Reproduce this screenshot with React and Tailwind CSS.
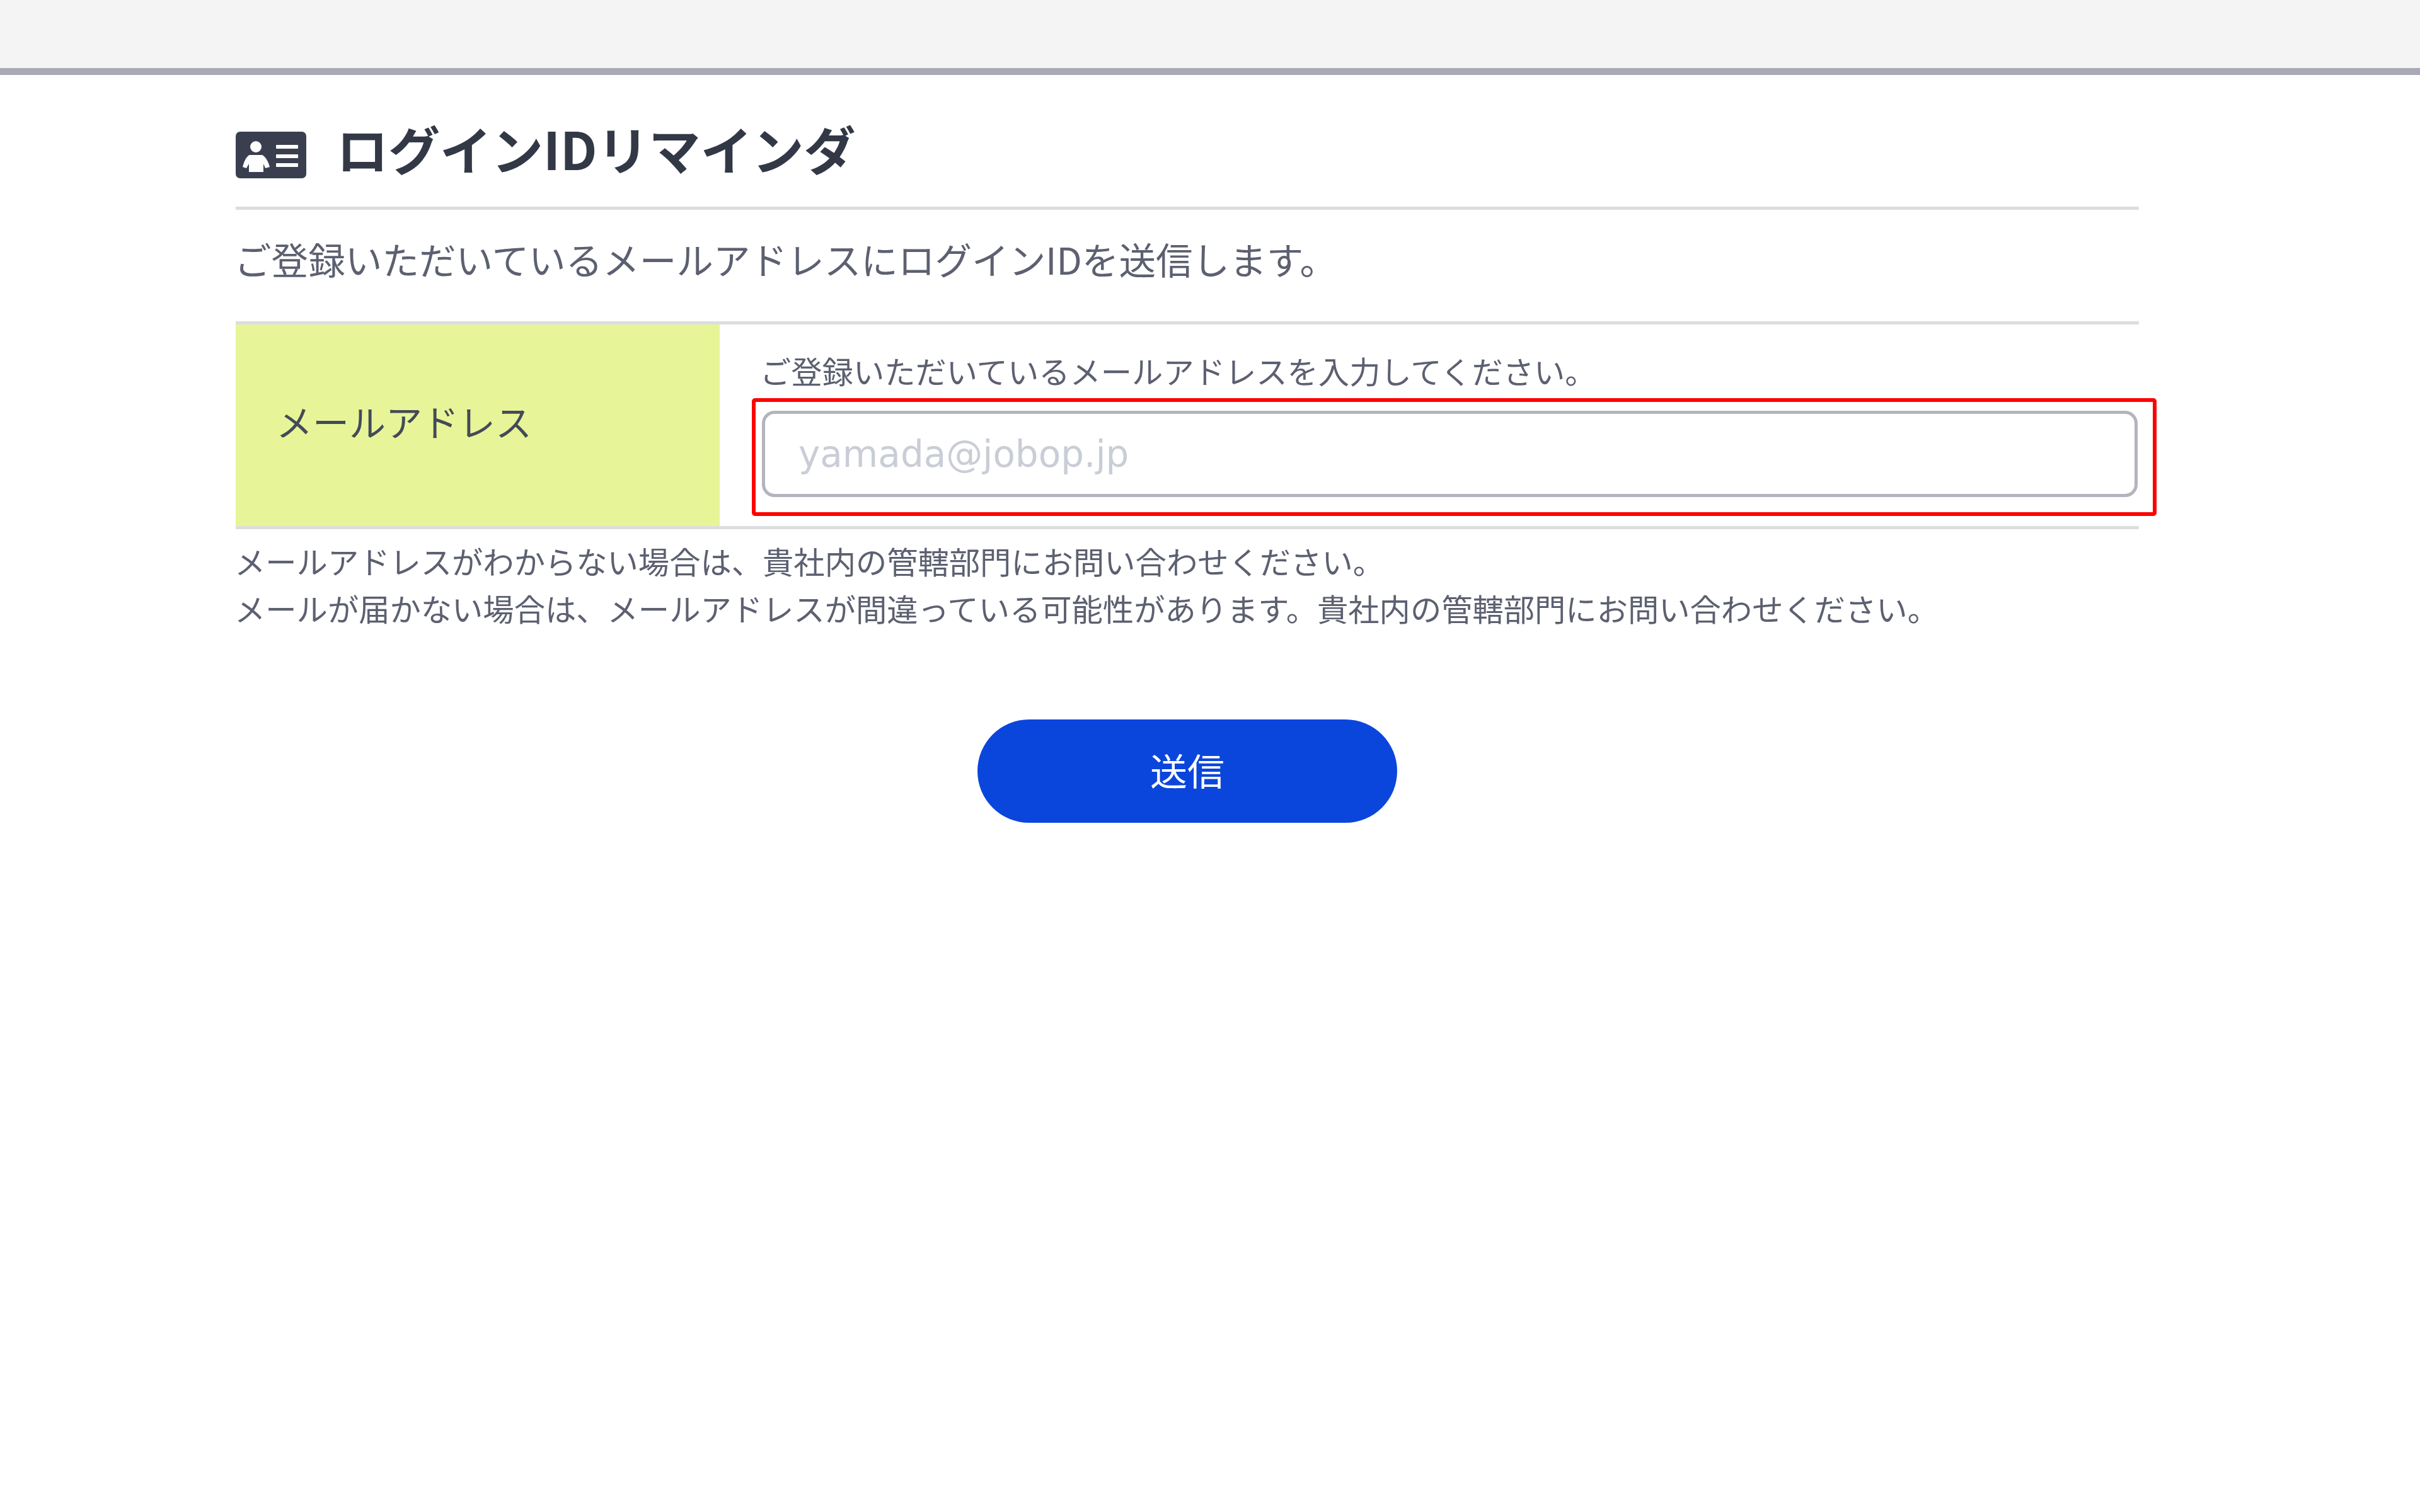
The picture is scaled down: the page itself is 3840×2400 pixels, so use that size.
const IdCardIcon = () => (
  <svg width="112" height="74" viewBox="0 0 112 74" className="mt-[14px] shrink-0">
    <rect x="0" y="0" width="112" height="74" rx="7" fill="#3a3f50" />
    <circle cx="32" cy="24" r="9" fill="#fff" />
    <path d="M22 37 H42 C47 39 52 48 54 56 L47 58 L44 51 V64 H21 V51 L17 58 L11 56 C13 48 17 39 22 37 Z" fill="#fff" />
    <rect x="64" y="21" width="35" height="6" rx="1" fill="#fff" />
    <rect x="64" y="36" width="35" height="6" rx="1" fill="#fff" />
    <rect x="64" y="50" width="35" height="6" rx="1" fill="#fff" />
  </svg>
);

export default function App() {
  return (
    <div className="min-h-[2400px] bg-white font-['Noto_Sans_CJK_JP',sans-serif] text-[#5c6070]">
      <div className="h-[119px] border-b-[11px] border-[#a9a9b5] bg-[#f4f4f4]" />

      <main className="ml-[374px] w-[3020px]">
        {/* Title */}
        <div className="flex h-[214px] items-center gap-[48px] border-b-[5px] border-[#dcdde1] pt-[100px] pb-[70px]">
          <IdCardIcon />
          <h1 className="mb-[8px] text-[82px] font-bold leading-none text-[#333846]">ログインIDリマインダ</h1>
        </div>

        <p className="mt-[38px] -ml-[2px] text-[58.6px] leading-[80px]">
          ご登録いただいているメールアドレスにログインIDを送信します。
        </p>

        {/* Form row */}
        <div className="mt-[59px] flex h-[330px] border-y-[5px] border-[#dcdde1]">
          <div className="flex w-[768px] items-center bg-[#e7f598] pl-[64px] pb-[14px] text-[58px] text-[#444a58]">
            メールアドレス
          </div>
          <div className="flex-1 pt-[42px] pl-[67px]">
            <p className="-ml-[3px] text-[49.3px] leading-[62px]">ご登録いただいているメールアドレスを入力してください。</p>
            <div className="relative mt-[33px] w-[2183px]">
              <input
                type="text"
                placeholder="yamada@jobop.jp"
                className="block h-[137px] w-full rounded-[20px] border-[5px] border-[#b4b4bc] bg-white px-[53px] font-['DejaVu_Sans',sans-serif] text-[58px] placeholder:text-[#c9cdd6]"
              />
              <div className="pointer-events-none absolute -top-[20px] -right-[30px] -bottom-[30px] -left-[16px] rounded-[5px] border-[6px] border-[#ff0000]" />
            </div>
          </div>
        </div>

        <div className="mt-[12px] -ml-[2px] text-[49.3px] leading-[75px]">
          <p>メールアドレスがわからない場合は、貴社内の管轄部門にお問い合わせください。</p>
          <p>メールが届かない場合は、メールアドレスが間違っている可能性があります。貴社内の管轄部門にお問い合わせください。</p>
        </div>

        <div className="mt-[140px] flex justify-center">
          <button className="h-[164px] w-[666px] rounded-full bg-[#0b46dc] pb-[4px] text-[59px] text-white">
            送信
          </button>
        </div>
      </main>
    </div>
  );
}
